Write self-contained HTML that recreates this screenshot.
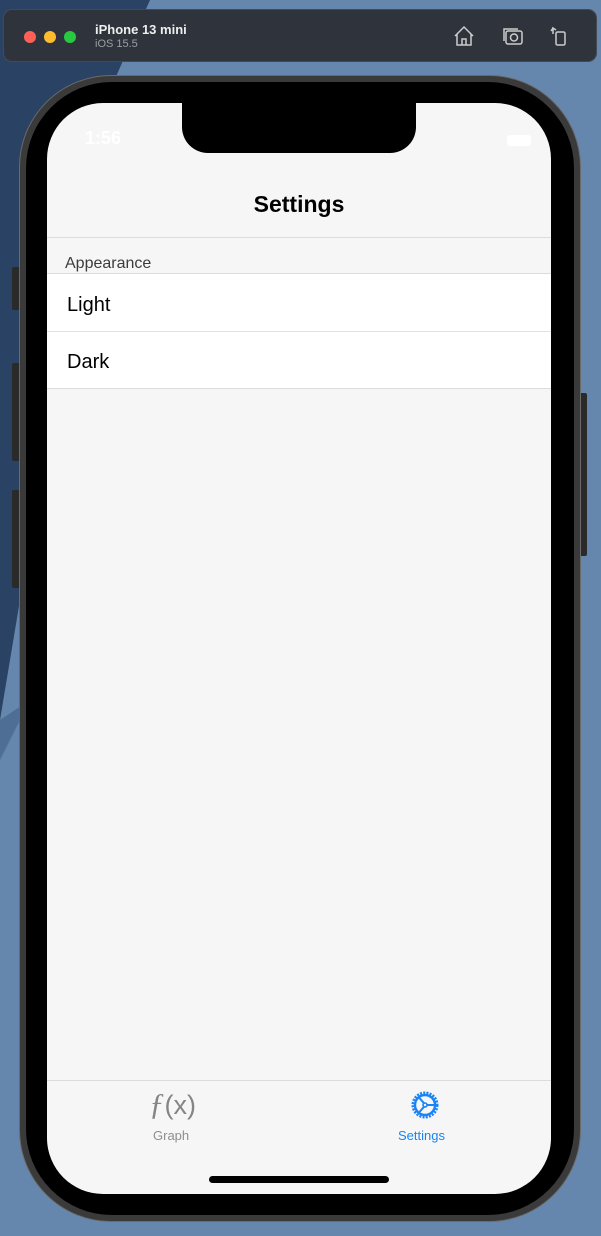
<!DOCTYPE html>
<html><head><meta charset="utf-8"><style>
*{margin:0;padding:0;box-sizing:border-box}
body{width:601px;height:1236px;overflow:hidden;position:relative;background:#6687ad;font-family:"Liberation Sans",sans-serif}
.bgdark{position:absolute;left:0;top:0;width:601px;height:1236px}
.win{position:absolute;left:3px;top:9px;width:594px;height:53px;background:#2f343c;border-radius:9px;border:1px solid #454a52}
.dot{position:absolute;top:21px;width:12px;height:12px;border-radius:50%}
.btn{position:absolute;background:#2a2a2a;border-radius:2px}
.phone{position:absolute;left:19px;top:75px;width:562px;height:1147px;border-radius:92px;background:#3a3a3a;border:1px solid #6a6a6a}
.bezel{position:absolute;left:26px;top:82px;width:548px;height:1133px;border-radius:86px;background:#000}
.screen{position:absolute;left:47px;top:103px;width:504px;height:1091px;border-radius:56px;background:#f6f6f6;overflow:hidden}
.notch{position:absolute;left:135px;top:0;width:234px;height:50px;background:#000;border-radius:0 0 26px 26px}
</style></head><body>
<svg class="bgdark" width="601" height="1236"><polygon points="0,0 150,0 110,90 60,300 20,600 0,720" fill="#2a4264"/><polygon points="0,720 30,700 0,760" fill="#4f6e95"/></svg>
<div class="win">
<div class="dot" style="left:20px;background:#fe5f57"></div>
<div class="dot" style="left:40px;background:#febc2e"></div>
<div class="dot" style="left:60px;background:#28c840"></div>
<div style="position:absolute;left:91px;top:12px;color:#eee;font-weight:bold;font-size:13px">iPhone 13 mini</div>
<div style="position:absolute;left:91px;top:28px;color:#9a9ea5;font-size:11px">iOS 15.5</div>
<svg style="position:absolute;left:448px;top:14px" width="24" height="24" viewBox="0 0 24 24" fill="none" stroke="#ccc" stroke-width="1.5"><path d="M3 12L12 3l9 9M5 10v11h14V10M10 21v-6h4v6"/></svg>
<svg style="position:absolute;left:497px;top:14px" width="24" height="24" viewBox="0 0 24 24" fill="none" stroke="#ccc" stroke-width="1.5"><rect x="5" y="7" width="16" height="13" rx="2"/><path d="M3 17V5h14"/><circle cx="13" cy="13.5" r="3.5"/></svg>
<svg style="position:absolute;left:543px;top:14px" width="24" height="24" viewBox="0 0 24 24" fill="none" stroke="#ccc" stroke-width="1.5"><rect x="9" y="8" width="9" height="13" rx="1.5"/><path d="M6 10V4l3 2M6 4L4 7"/></svg>
</div>
<div class="btn" style="left:12px;top:267px;width:9px;height:43px"></div>
<div class="btn" style="left:12px;top:363px;width:9px;height:98px"></div>
<div class="btn" style="left:12px;top:490px;width:9px;height:98px"></div>
<div class="btn" style="left:579px;top:393px;width:8px;height:163px"></div>
<div class="phone"></div>
<div class="bezel"></div>
<div class="screen">
<div class="notch"></div>
<div style="position:absolute;left:38px;top:25px;color:#fff;font-size:18px;font-weight:bold">1:56</div>
<div style="position:absolute;left:460px;top:32px;width:24px;height:11px;background:#fff;border-radius:3px"></div>
<div style="position:absolute;left:0;top:88px;width:504px;text-align:center;font-size:23px;font-weight:bold;color:#000">Settings</div>
<div style="position:absolute;left:0;top:134px;width:504px;height:1px;background:#dcdcdc"></div>
<div style="position:absolute;left:18px;top:152px;font-size:16px;color:#3c3c3c">Appearance</div>
<div style="position:absolute;left:0;top:170px;width:504px;height:116px;background:#fff;border-top:1px solid #dcdcdc;border-bottom:1px solid #dcdcdc"></div>
<div style="position:absolute;left:0;top:228px;width:504px;height:1px;background:#e2e2e2"></div>
<div style="position:absolute;left:20px;top:191px;font-size:20px;color:#000">Light</div>
<div style="position:absolute;left:20px;top:248px;font-size:20px;color:#000">Dark</div>
<div style="position:absolute;left:0;top:977px;width:504px;height:1px;background:#dcdcdc"></div>
<div style="position:absolute;left:102px;top:983px;font-size:31px;color:#858585;font-family:'Liberation Serif',serif;font-style:italic">ƒ<span style="font-family:'Liberation Sans',sans-serif;font-style:normal;font-size:27px">(x)</span></div>
<div style="position:absolute;left:106px;top:1025px;font-size:13px;color:#8e8e8e">Graph</div>
<svg style="position:absolute;left:362px;top:986px" width="32" height="32" viewBox="0 0 32 32" fill="none" stroke="#1a84f7" stroke-width="2.4"><circle cx="16" cy="16" r="12" stroke-dasharray="2 1.2" stroke-width="3"/><circle cx="16" cy="16" r="10"/><circle cx="16" cy="16" r="2" stroke-width="1.6"/><path d="M18 16h8M15 14.2L10 8.5M15 17.8L10 23.5" stroke-width="2"/></svg>
<div style="position:absolute;left:351px;top:1025px;font-size:13px;color:#1a84f7">Settings</div>
<div style="position:absolute;left:162px;top:1073px;width:180px;height:7px;border-radius:4px;background:#000"></div>
</div>
</body></html>
